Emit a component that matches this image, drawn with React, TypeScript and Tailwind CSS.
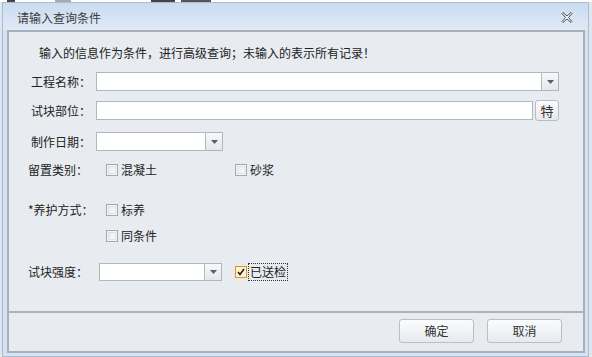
import React from 'react';

const font = { fontFamily: '"Microsoft YaHei", "Noto Sans CJK SC", sans-serif' };

const Arrow: React.FC = () => (
  <div className="w-[17px] h-full border-l border-[#b4bac1] bg-gradient-to-b from-[#f7f8fa] to-[#e4e8ec] flex items-center justify-center">
    <svg width="7" height="4" viewBox="0 0 7 4">
      <path d="M0 0 H7 L3.5 4 Z" fill="#5a5f66" />
    </svg>
  </div>
);

const Combo: React.FC<{ className: string }> = ({ className }) => (
  <div className={`flex bg-white border border-[#b1b7be] ${className}`}>
    <div className="flex-1" />
    <Arrow />
  </div>
);

const Check: React.FC<{ label: string; checked?: boolean; focus?: boolean }> = ({ label, checked, focus }) => (
  <div className="flex items-center">
    {checked ? (
      <div className="w-[12px] h-[12px] border border-[#e0922a] bg-[#fff2cf] flex items-center justify-center">
        <svg width="8" height="8" viewBox="0 0 8 8">
          <path d="M1 4 L3 6.5 L7 1" stroke="#1e1e1e" strokeWidth="1.6" fill="none" />
        </svg>
      </div>
    ) : (
      <div className="w-[12px] h-[12px] border border-[#a4a9af] bg-[#f3f4f6] p-[1px]">
        <div className="w-full h-full border border-[#dfe2e6] bg-gradient-to-br from-[#e8eaed] to-[#fbfbfc]" />
      </div>
    )}
    <span
      className={`ml-[2px] text-[12px] leading-[16px] text-[#222] px-[1px] ${focus ? 'outline outline-1 outline-dotted outline-[#333]' : ''}`}
    >
      {label}
    </span>
  </div>
);

export default function App() {
  return (
    <div className="w-[592px] h-[357px] bg-[#dfe6ee] overflow-hidden" style={font}>
      {/* bit of page behind the window */}
      <div className="h-[2px] flex bg-white">
        <div className="w-[7px]" />
        <div className="w-[8px] bg-[#444]" />
        <div className="w-[40px]" />
        <div className="w-[16px] bg-[#aaa]" />
        <div className="w-[80px]" />
        <div className="w-[24px] bg-[#444]" />
        <div className="w-[6px]" />
        <div className="w-[30px] bg-[#555]" />
      </div>

      <div className="ml-[2px] w-[587px] h-[355px] border border-[#a9bbd1] bg-[#d4e2f3] flex flex-col">
        {/* title bar */}
        <div className="h-[27px] flex items-center bg-gradient-to-b from-[#c9dcf1] to-[#e0eaf6] pl-[14px] pr-[14px]">
          <span className="text-[12px] text-[#3b3b3b] mt-[2px]">请输入查询条件</span>
          <div className="flex-1" />
          <svg width="12" height="11" viewBox="0 0 12 11" className="mt-[2px] mr-[1px]">
            <path
              d="M1 1.5 L2 0.5 L6 4 L10 0.5 L11 1.5 L7.5 5.5 L11 9.5 L10 10.5 L6 7 L2 10.5 L1 9.5 L4.5 5.5 Z"
              fill="#f4f6f8"
              stroke="#4a4f55"
              strokeWidth="1"
            />
          </svg>
        </div>

        {/* panel */}
        <div className="ml-[4px] w-[578px] h-[323px] border-2 border-[#a9b0b9] bg-[#e8ebf0] flex flex-col">
          <div className="h-[279px] flex flex-col text-[12px] text-[#222]">
            <div className="mt-[13px] h-[16px] leading-[16px] pl-[30px]">
              输入的信息作为条件，进行高级查询；未输入的表示所有记录！
            </div>

            <div className="mt-[11px] h-[19px] flex items-center">
              <span className="w-[65px] pl-[22px] box-content">工程名称：</span>
              <Combo className="w-[463px] h-[19px]" />
            </div>

            <div className="mt-[10px] h-[19px] flex items-center">
              <span className="w-[65px] pl-[22px] box-content">试块部位：</span>
              <div className="w-[437px] h-[19px] bg-white border border-[#b1b7be]" />
              <button className="ml-[2px] w-[24px] h-[21px] rounded-[3px] border border-[#b8bdc3] bg-gradient-to-b from-[#fafbfc] to-[#e6e9ed] text-[13px] text-[#333] leading-none">
                特
              </button>
            </div>

            <div className="mt-[12px] h-[19px] flex items-center">
              <span className="w-[65px] pl-[22px] box-content">制作日期：</span>
              <Combo className="w-[127px] h-[19px]" />
            </div>

            <div className="mt-[11px] h-[16px] flex items-center">
              <span className="w-[78px] pl-[19px] box-content">留置类别：</span>
              <div className="w-[129px]">
                <Check label="混凝土" />
              </div>
              <Check label="砂浆" />
            </div>

            <div className="mt-[24px] h-[16px] flex items-center">
              <span className="w-[78px] pl-[19px] box-content">*养护方式：</span>
              <Check label="标养" />
            </div>

            <div className="mt-[10px] h-[16px] flex items-center">
              <span className="w-[78px] pl-[19px] box-content" />
              <Check label="同条件" />
            </div>

            <div className="mt-[19px] h-[18px] flex items-center">
              <span className="w-[71px] pl-[19px] box-content">试块强度：</span>
              <Combo className="w-[123px] h-[18px]" />
              <div className="ml-[13px]">
                <Check label="已送检" checked focus />
              </div>
            </div>
          </div>

          {/* footer */}
          <div className="h-[2px] bg-[#b0b4b9]" />
          <div className="flex-1 flex items-start justify-end gap-[13px] pt-[6px] pr-[21px]">
            <button className="w-[75px] h-[24px] rounded-[3px] border border-[#babfc5] bg-gradient-to-b from-[#fbfcfd] to-[#e7eaee] text-[12px] text-[#333]">
              确定
            </button>
            <button className="w-[75px] h-[24px] rounded-[3px] border border-[#babfc5] bg-gradient-to-b from-[#fbfcfd] to-[#e7eaee] text-[12px] text-[#333]">
              取消
            </button>
          </div>
        </div>
      </div>
    </div>
  );
}
